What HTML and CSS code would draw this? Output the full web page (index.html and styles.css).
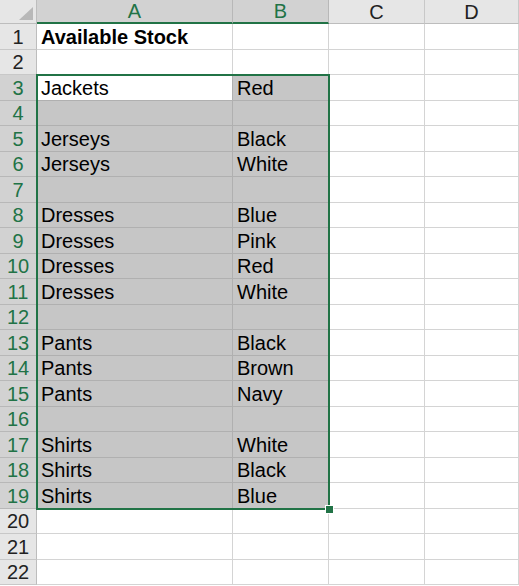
FILE: index.html
```html
<!DOCTYPE html>
<html lang="en">
<head>
    <meta charset="UTF-8">
    <meta name="viewport" content="width=device-width, initial-scale=1.0">
    <link rel="stylesheet" href="styles.css">
    <title>Available Stock</title>
</head>
<body>
    <!-- sheet grid: row header + columns A..D -->
    <div class="sheet">
        <div class="hd corner"><span class="tri"></span></div>
        <div class="hd col on">A</div><div class="hd col on">B</div><div class="hd col">C</div><div class="hd col">D</div>

        <div class="hd row">1</div><div class="cell bold">Available Stock</div><div class="cell"></div><div class="cell"></div><div class="cell"></div>
        <div class="hd row">2</div><div class="cell"></div><div class="cell"></div><div class="cell"></div><div class="cell"></div>
        <div class="hd row on">3</div><div class="cell sel active">Jackets</div><div class="cell sel">Red</div><div class="cell"></div><div class="cell"></div>
        <div class="hd row on">4</div><div class="cell sel"></div><div class="cell sel"></div><div class="cell"></div><div class="cell"></div>
        <div class="hd row on">5</div><div class="cell sel">Jerseys</div><div class="cell sel">Black</div><div class="cell"></div><div class="cell"></div>
        <div class="hd row on">6</div><div class="cell sel">Jerseys</div><div class="cell sel">White</div><div class="cell"></div><div class="cell"></div>
        <div class="hd row on">7</div><div class="cell sel"></div><div class="cell sel"></div><div class="cell"></div><div class="cell"></div>
        <div class="hd row on">8</div><div class="cell sel">Dresses</div><div class="cell sel">Blue</div><div class="cell"></div><div class="cell"></div>
        <div class="hd row on">9</div><div class="cell sel">Dresses</div><div class="cell sel">Pink</div><div class="cell"></div><div class="cell"></div>
        <div class="hd row on">10</div><div class="cell sel">Dresses</div><div class="cell sel">Red</div><div class="cell"></div><div class="cell"></div>
        <div class="hd row on">11</div><div class="cell sel">Dresses</div><div class="cell sel">White</div><div class="cell"></div><div class="cell"></div>
        <div class="hd row on">12</div><div class="cell sel"></div><div class="cell sel"></div><div class="cell"></div><div class="cell"></div>
        <div class="hd row on">13</div><div class="cell sel">Pants</div><div class="cell sel">Black</div><div class="cell"></div><div class="cell"></div>
        <div class="hd row on">14</div><div class="cell sel">Pants</div><div class="cell sel">Brown</div><div class="cell"></div><div class="cell"></div>
        <div class="hd row on">15</div><div class="cell sel">Pants</div><div class="cell sel">Navy</div><div class="cell"></div><div class="cell"></div>
        <div class="hd row on">16</div><div class="cell sel"></div><div class="cell sel"></div><div class="cell"></div><div class="cell"></div>
        <div class="hd row on">17</div><div class="cell sel">Shirts</div><div class="cell sel">White</div><div class="cell"></div><div class="cell"></div>
        <div class="hd row on">18</div><div class="cell sel">Shirts</div><div class="cell sel">Black</div><div class="cell"></div><div class="cell"></div>
        <div class="hd row on">19</div><div class="cell sel">Shirts</div><div class="cell sel">Blue</div><div class="cell"></div><div class="cell"></div>
        <div class="hd row">20</div><div class="cell"></div><div class="cell"></div><div class="cell"></div><div class="cell"></div>
        <div class="hd row">21</div><div class="cell"></div><div class="cell"></div><div class="cell"></div><div class="cell"></div>
        <div class="hd row">22</div><div class="cell"></div><div class="cell"></div><div class="cell"></div><div class="cell"></div>

        <!-- selection frame A3:B19 -->
        <div class="selection"><span class="handle"></span></div>
    </div>
</body>
</html>
```

FILE: styles.css
```css
:root {
    --grid-line: #d4d4d4;
    --head-bg: #e6e6e6;
    --head-line: #bdbdbd;
    --head-on: #d2d2d2;
    --sel-bg: #c6c6c6;
    --sel-line: #b0b0b0;
    --green: #217346;
}
body {
    margin: 0;
    overflow: hidden;
    background: #fff;
    font-family: "Liberation Sans", Arial, sans-serif;
    font-size: 20px;
    color: #000;
}
.sheet {
    position: relative;
    display: grid;
    grid-template-columns: 37px 196px 96px 96px 94px;
    grid-template-rows: 24px repeat(22, 25.5px);
}
.hd {
    box-sizing: border-box;
    background: var(--head-bg);
    color: #222;
    display: flex;
    align-items: center;
    justify-content: center;
    line-height: 19px;
}
.col {
    border-right: 1px solid #c8c8c8;
    border-bottom: 1px solid var(--head-line);
    padding-top: 1px;
}
.col.on {
    background: var(--head-on);
    color: var(--green);
    border-bottom: 2px solid var(--green);
    border-right-color: #b8b8b8;
}
.row {
    border-right: 1px solid var(--head-line);
    border-bottom: 1px solid #c8c8c8;
    align-items: flex-end;
    padding-bottom: 2px;
}
.row.on {
    background: var(--head-on);
    color: var(--green);
    border-bottom-color: #b8b8b8;
}
.corner {
    border-right: 1px solid var(--head-line);
    border-bottom: 1px solid var(--head-line);
    align-items: flex-end;
    justify-content: flex-end;
    padding: 0 3px 3px 0;
}
.tri {
    width: 14px;
    height: 13px;
    background: #b8b8b8;
    clip-path: polygon(100% 0, 100% 100%, 0 100%);
}
.cell {
    box-sizing: border-box;
    border-right: 1px solid var(--grid-line);
    border-bottom: 1px solid var(--grid-line);
    display: flex;
    align-items: flex-end;
    padding: 0 0 2px 4px;
    line-height: 19px;
    white-space: nowrap;
}
.bold {
    font-weight: bold;
}
.sel {
    background: var(--sel-bg);
    border-color: var(--sel-line);
}
.sel.active {
    background: #fff;
}
.selection {
    position: absolute;
    left: 36px;
    top: 74px;
    width: 294px;
    height: 436px;
    box-sizing: border-box;
    border: 2px solid var(--green);
    pointer-events: none;
}
.handle {
    position: absolute;
    right: -6px;
    bottom: -6px;
    width: 7px;
    height: 7px;
    background: var(--green);
    border: 1px solid #fff;
}
```
